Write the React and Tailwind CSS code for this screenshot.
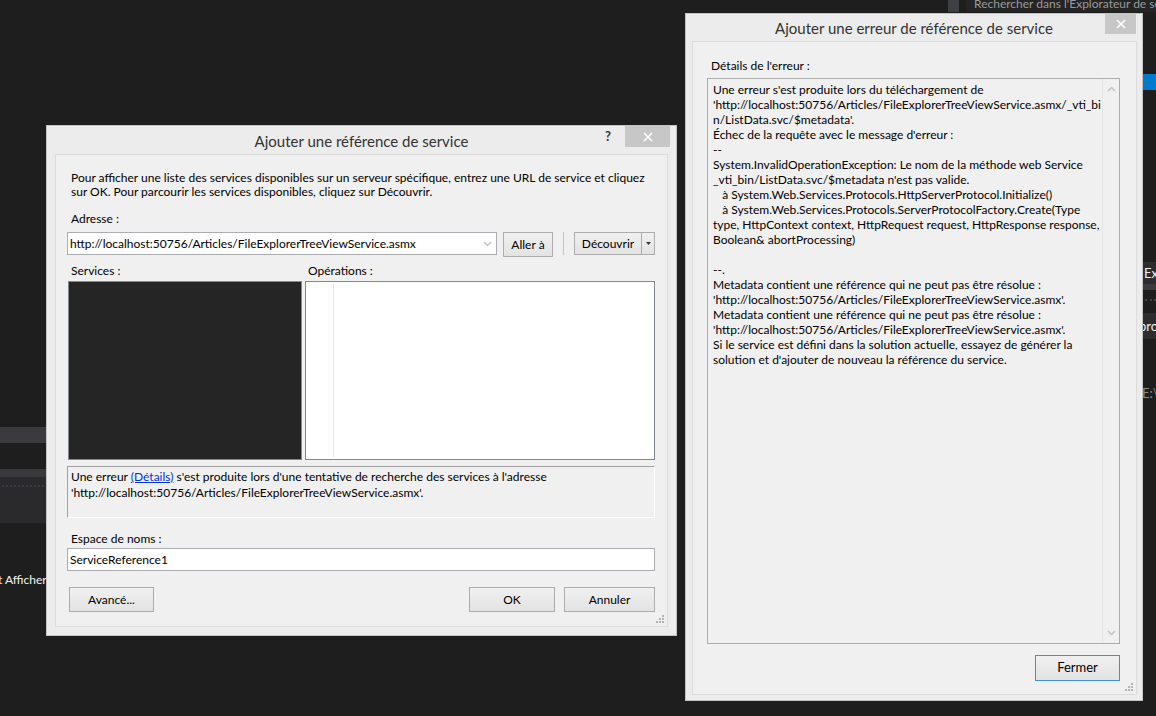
import React from 'react';

const CloseX = () => (
  <svg width="10" height="10" viewBox="0 0 10 10">
    <path d="M1 1 L9 9 M9 1 L1 9" stroke="#fff" strokeWidth="1.6" />
  </svg>
);

const Grip = () => (
  <svg width="9" height="9" viewBox="0 0 9 9" fill="#b4b4b4">
    <rect x="6" y="0" width="2" height="2" />
    <rect x="3" y="3" width="2" height="2" />
    <rect x="6" y="3" width="2" height="2" />
    <rect x="0" y="6" width="2" height="2" />
    <rect x="3" y="6" width="2" height="2" />
    <rect x="6" y="6" width="2" height="2" />
  </svg>
);

const Chevron = ({ up }) => (
  <svg width="9" height="6" viewBox="0 0 9 6">
    <path d={up ? 'M1 5 L4.5 1.5 L8 5' : 'M1 1 L4.5 4.5 L8 1'} stroke="#c2c2c2" strokeWidth="1.5" fill="none" />
  </svg>
);

const Button = ({ children, className = '' }) => (
  <div className={`h-[25px] flex items-center justify-center border border-[#acacac] bg-linear-to-b from-[#f0f0f0] to-[#e3e3e3] text-[12px] text-black ${className}`}>
    {children}
  </div>
);

const errorLines = [
  "Une erreur s'est produite lors du téléchargement de",
  "'http://localhost:50756/Articles/FileExplorerTreeViewService.asmx/_vti_bi",
  "n/ListData.svc/$metadata'.",
  "Échec de la requête avec le message d'erreur :",
  '--',
  'System.InvalidOperationException: Le nom de la méthode web Service',
  "_vti_bin/ListData.svc/$metadata n'est pas valide.",
  '   à System.Web.Services.Protocols.HttpServerProtocol.Initialize()',
  '   à System.Web.Services.Protocols.ServerProtocolFactory.Create(Type',
  'type, HttpContext context, HttpRequest request, HttpResponse response,',
  'Boolean& abortProcessing)',
  '',
  '--.',
  'Metadata contient une référence qui ne peut pas être résolue :',
  "'http://localhost:50756/Articles/FileExplorerTreeViewService.asmx'.",
  'Metadata contient une référence qui ne peut pas être résolue :',
  "'http://localhost:50756/Articles/FileExplorerTreeViewService.asmx'.",
  'Si le service est défini dans la solution actuelle, essayez de générer la',
  "solution et d'ajouter de nouveau la référence du service.",
];

export default function App() {
  return (
    <div className="relative w-[1156px] h-[716px] overflow-hidden bg-[#1e1e1e] font-[Lato,'Noto_Sans',sans-serif]">
      {/* Visual Studio behind the dialogs */}
      <div className="absolute left-[948px] top-0 w-[11px] h-[12px] bg-[#3f3f46]" />
      <div className="absolute left-[966px] top-0 w-[190px] h-[12px] bg-[#252526] overflow-hidden">
        <div className="mt-[-3px] ml-[8px] text-[12px] leading-[14px] text-[#9a9a9a] whitespace-nowrap">Rechercher dans l'Explorateur de solutions</div>
      </div>

      <div className="absolute left-0 top-[427px] w-[46px] h-[16px] bg-[#3a3a3f]" />
      <div className="absolute left-0 top-[469px] w-[46px] h-[54px] bg-[#2a2a2d] flex flex-col">
        <div className="h-[8px] bg-[#38383d]" />
        <div className="mt-[8px] mx-[2px] border-t-2 border-dotted border-[#3a3a3f]" />
      </div>
      <div className="absolute left-[-2px] top-[572px] text-[12px] leading-[15px] text-[#f1f1f1] whitespace-nowrap">t Afficher</div>

      <div className="absolute left-[1143px] top-[74px] w-[13px] h-[16px] bg-[#007acc]" />
      <div className="absolute left-[1143px] top-[262px] w-[13px] h-[28px] bg-[#2d2d30] flex flex-col overflow-hidden">
        <div className="h-[22px] pl-[1px] text-[13px] leading-[22px] text-[#f1f1f1] whitespace-nowrap">Ex</div>
        <div className="h-[6px] bg-[#3a3a3f]" />
      </div>
      <div className="absolute left-[1145px] top-[299px] w-[11px] border-t-2 border-dotted border-[#444]" />
      <div className="absolute left-[1143px] top-[313px] w-[13px] h-[26px] bg-[#2d2d30] overflow-hidden">
        <div className="ml-[-4px] text-[13px] leading-[26px] text-[#f1f1f1] whitespace-nowrap">pro</div>
      </div>
      <div className="absolute left-[1143px] top-[384px] w-[13px] h-[18px] overflow-hidden">
        <div className="ml-[-1px] text-[13px] leading-[18px] text-[#8a8a8a] whitespace-nowrap">E:\</div>
      </div>

      {/* Ajouter une référence de service */}
      <div className="absolute left-[46px] top-[125px] w-[631px] h-[511px] bg-[#ececec] border border-[#c4c4c4] flex flex-col">
        <div className="h-[28px] grid grid-cols-[1fr_auto_1fr]">
          <div />
          <div className="pt-[5px] text-[15px] leading-[20px] text-[#333]">Ajouter une référence de service</div>
          <div className="flex justify-end items-start">
            <span className="mt-[2px] mr-[14px] text-[13px] font-bold leading-[16px] text-[#333]">?</span>
            <div className="mr-[6px] w-[45px] h-[21px] bg-[#c7c7c7] flex items-center justify-center">
              <CloseX />
            </div>
          </div>
        </div>

        <div className="relative flex-1 mx-[8px] mb-[8px] bg-[#f0f0f0] border border-[#dcdcdc] pl-[11px] pr-[12px] flex flex-col text-[12px] text-black">
          <div className="mt-[16px] pl-[4px] leading-[14px]">
            <div className="whitespace-nowrap">Pour afficher une liste des services disponibles sur un serveur spécifique, entrez une URL de service et cliquez</div>
            <div className="whitespace-nowrap">sur OK. Pour parcourir les services disponibles, cliquez sur Découvrir.</div>
          </div>
          <div className="mt-[12px] pl-[4px] leading-[15px]">Adresse :</div>
          <div className="mt-[6px] h-[23px] flex items-stretch">
            <div className="w-[430px] bg-white border border-[#abadb3] flex items-center pl-[2px] pr-[4px]">
              <span className="flex-1 whitespace-nowrap">http://localhost:50756/Articles/FileExplorerTreeViewService.asmx</span>
              <Chevron />
            </div>
            <Button className="ml-[6px] w-[50px] h-[23px]">Aller à</Button>
            <div className="mx-[10px] w-[1px] bg-[#c6c6c6]" />
            <div className="w-[81px] h-[23px] flex border border-[#acacac] bg-linear-to-b from-[#f0f0f0] to-[#e3e3e3]">
              <div className="flex-1 flex items-center justify-center">Découvrir</div>
              <div className="w-[13px] border-l border-[#acacac] flex items-center justify-center">
                <svg width="5" height="3" viewBox="0 0 5 3"><path d="M0 0 H5 L2.5 3 Z" fill="#333" /></svg>
              </div>
            </div>
          </div>

          <div className="mt-[8px] flex leading-[15px]">
            <div className="w-[237px] pl-[4px]">Services :</div>
            <div className="pl-[4px]">Opérations :</div>
          </div>
          <div className="mt-[3px] h-[179px] flex">
            <div className="ml-[1px] w-[234px] bg-[#252526] border border-[#828790]" />
            <div className="ml-[3px] flex-1 bg-white border border-[#828790] flex pt-[2px] pb-[2px]">
              <div className="ml-[27px] w-[1px] bg-[#e2eaf6]" />
            </div>
          </div>

          <div className="mt-[6px] h-[52px] border-t border-l border-[#a0a0a0] border-r border-b border-r-white border-b-white pl-[3px] pt-[2px] leading-[16px]">
            <div className="whitespace-nowrap">
              Une erreur <span className="text-[#0033dd] underline">(Détails)</span> s'est produite lors d'une tentative de recherche des services à l'adresse
            </div>
            <div className="whitespace-nowrap">'http://localhost:50756/Articles/FileExplorerTreeViewService.asmx'.</div>
          </div>

          <div className="mt-[13px] pl-[4px] leading-[15px]">Espace de noms :</div>
          <div className="mt-[2px] h-[23px] bg-white border border-[#abadb3] flex items-center pl-[2px]">ServiceReference1</div>

          <div className="mt-[16px] flex">
            <Button className="ml-[2px] w-[85px]">Avancé...</Button>
            <div className="flex-1" />
            <Button className="w-[86px]">OK</Button>
            <Button className="ml-[9px] w-[91px]">Annuler</Button>
          </div>

          <div className="absolute right-[2px] bottom-[2px]"><Grip /></div>
        </div>
      </div>

      {/* Ajouter une erreur de référence de service */}
      <div className="absolute left-[685px] top-[13px] w-[458px] h-[688px] bg-[#ececec] border border-[#c4c4c4] flex flex-col">
        <div className="h-[27px] grid grid-cols-[1fr_auto_1fr]">
          <div />
          <div className="pt-[4px] text-[15px] leading-[20px] text-[#333]">Ajouter une erreur de référence de service</div>
          <div className="flex justify-end items-start">
            <div className="mr-[6px] w-[31px] h-[20px] bg-[#c7c7c7] flex items-center justify-center">
              <CloseX />
            </div>
          </div>
        </div>

        <div className="relative flex-1 ml-[6px] mr-[5px] mb-[5px] bg-[#f0f0f0] border border-[#dcdcdc] pl-[14px] pr-[16px] flex flex-col text-[12px] text-black">
          <div className="mt-[16px] pl-[4px] leading-[15px]">Détails de l'erreur :</div>
          <div className="mt-[5px] h-[566px] border border-[#acacac] flex">
            <div className="flex-1 pl-[5px] pt-[3px] leading-[15px]">
              {errorLines.map((l, i) => (
                <div key={i} className="h-[15px] whitespace-pre">{l}</div>
              ))}
            </div>
            <div className="w-[17px] border-l border-[#e6e6e6] flex flex-col items-center justify-between py-[7px]">
              <Chevron up />
              <Chevron />
            </div>
          </div>
          <div className="mt-[11px] flex justify-end">
            <div className="w-[85px] h-[26px] border border-[#3d8ee6] bg-linear-to-b from-[#f0f0f0] to-[#e3e3e3] flex items-center justify-center text-[13px]">
              Fermer
            </div>
          </div>
          <div className="absolute right-[2px] bottom-[2px]"><Grip /></div>
        </div>
      </div>
    </div>
  );
}
